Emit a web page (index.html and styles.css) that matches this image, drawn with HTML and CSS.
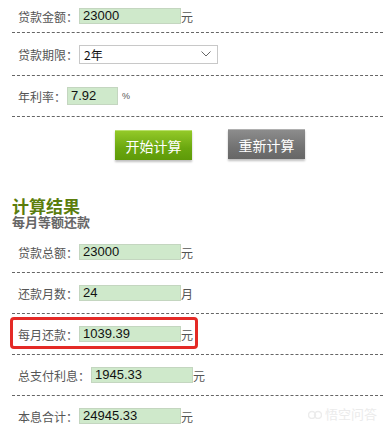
FILE: index.html
```html
<!DOCTYPE html>
<html lang="zh">
<head>
  <meta charset="UTF-8" />
  <meta name="viewport" content="width=device-width, initial-scale=1.0" />
  <title>贷款计算器</title>
  <link rel="stylesheet" href="styles.css">
</head>
<body>
  <div class="calc">
    <div class="row row-first">
      <span class="label">贷款金额：</span>
      <span class="field">23000</span>
      <span class="unit">元</span>
    </div>
    <div class="row row-select">
      <span class="label">贷款期限：</span>
      <span class="select">
        <span>2年</span>
        <svg width="10" height="6" viewBox="0 0 10 6"><path d="M0.5 0.5 L5 5 L9.5 0.5" fill="none" stroke="#666" stroke-width="1"/></svg>
      </span>
    </div>
    <div class="row row-rate">
      <span class="label">年利率：</span>
      <span class="field field-short">7.92</span>
      <span class="unit unit-small">%</span>
    </div>

    <div class="buttons">
      <span class="btn btn-go">开始计算</span>
      <span class="btn btn-reset">重新计算</span>
    </div>

    <h2 class="title">计算结果</h2>
    <h3 class="subtitle">每月等额还款</h3>

    <div class="result">
      <div class="row">
        <span class="label">贷款总额：</span>
        <span class="field">23000</span>
        <span class="unit">元</span>
      </div>
      <div class="row">
        <span class="label">还款月数：</span>
        <span class="field">24</span>
        <span class="unit">月</span>
      </div>
      <div class="row marked">
        <span class="label">每月还款：</span>
        <span class="field">1039.39</span>
        <span class="unit">元</span>
        <span class="mark"></span>
      </div>
      <div class="row">
        <span class="label">总支付利息：</span>
        <span class="field">1945.33</span>
        <span class="unit">元</span>
      </div>
      <div class="row row-last">
        <span class="label">本息合计：</span>
        <span class="field">24945.33</span>
        <span class="unit">元</span>
      </div>
    </div>
  </div>

  <div class="watermark">
    <svg width="14" height="10" viewBox="0 0 14 10"><circle cx="4" cy="6" r="3.5" fill="none" stroke="#ececec" stroke-width="1.5"/><circle cx="10" cy="6" r="3.5" fill="none" stroke="#ececec" stroke-width="1.5"/></svg>
    <span>悟空问答</span>
  </div>
</body>
</html>
```

FILE: styles.css
```css
body {
  margin: 0;
  background: white;
  font-family: "Noto Sans CJK SC", "Liberation Sans", sans-serif;
  overflow: hidden;
}
.calc {
  padding-left: 12px;
}
.row {
  position: relative;
  display: flex;
  align-items: center;
  height: 40px;
  padding-left: 6px;
  border-bottom: 1px dashed #666;
}
.row-first {
  height: 32px;
}
.row-select {
  height: 42px;
}
.row-rate {
  height: 40px;
}
.row-last {
  border-bottom: none;
}
.label {
  font-size: 12px;
  color: #555;
  white-space: nowrap;
}
.field {
  box-sizing: border-box;
  width: 102px;
  height: 16px;
  margin-left: 1px;
  padding-left: 3px;
  background: #cfe9cb;
  border: 1px solid #c4d6c0;
  font-family: "Liberation Sans", sans-serif;
  font-size: 13px;
  line-height: 14px;
  color: #111;
}
.field-short {
  width: 51px;
  height: 18px;
  line-height: 16px;
}
.unit {
  font-size: 12px;
  color: #555;
}
.unit-small {
  font-size: 9px;
  margin-left: 4px;
  font-family: "Liberation Sans", sans-serif;
}
.select {
  box-sizing: border-box;
  display: flex;
  align-items: center;
  justify-content: space-between;
  width: 139px;
  height: 19px;
  margin-left: 1px;
  padding: 0 6px 0 4px;
  border: 1px solid #c8c8c8;
  font-size: 12px;
  color: #111;
}
.buttons {
  display: flex;
  gap: 36px;
  padding: 12px 0 0 103px;
  height: 68px;
}
.btn {
  box-sizing: border-box;
  display: flex;
  align-items: center;
  justify-content: center;
  width: 77px;
  height: 30px;
  color: white;
  font-size: 14px;
  box-shadow: 0 2px 2px rgba(0, 0, 0, 0.25);
}
.btn-go {
  margin-top: 1px;
  background: linear-gradient(#93c928, #6aa70f 60%, #5e9a08);
  border-top: 1px solid #b8e06a;
}
.btn-reset {
  background: linear-gradient(#8c8c8c, #727272 60%, #666);
  border-top: 1px solid #b0b0b0;
}
.title {
  margin: 0;
  font-size: 17px;
  line-height: 18px;
  font-weight: 700;
  color: #5b7d0c;
}
.subtitle {
  margin: 0 0 3px;
  font-size: 13px;
  line-height: 14px;
  font-weight: 700;
  color: #666;
}
.mark {
  position: absolute;
  left: -2px;
  top: 3px;
  width: 188px;
  height: 32px;
  box-sizing: border-box;
  border: 3px solid #e42a26;
  border-radius: 4px;
}
.watermark {
  position: absolute;
  right: 6px;
  bottom: 9px;
  display: flex;
  align-items: center;
  gap: 3px;
  font-size: 13px;
  color: #ebebeb;
}
```
